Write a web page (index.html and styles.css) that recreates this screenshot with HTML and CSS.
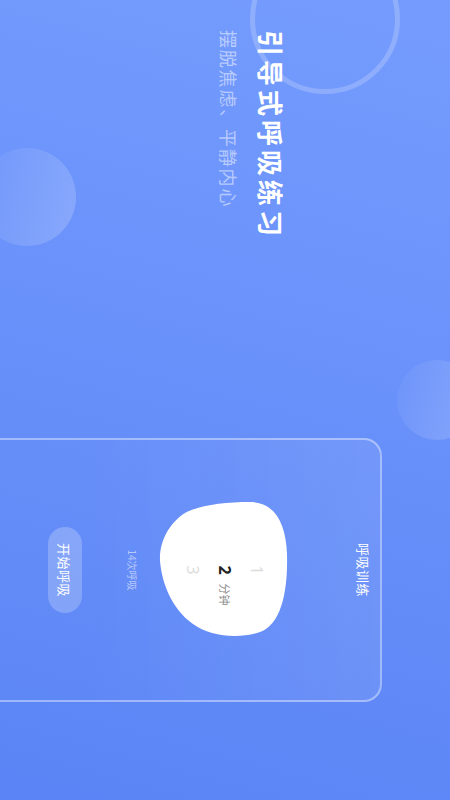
FILE: index.html
```html
<!DOCTYPE html>
<html lang="zh-CN">
<head>
    <meta charset="UTF-8" />
    <meta name="viewport" content="width=device-width, initial-scale=1.0"/>
    <title>引导式呼吸练习</title>
    <link rel="stylesheet" href="styles.css">
</head>
<body>

<div class="screen">
    <!-- decorative bubbles -->
    <div class="ring"></div>
    <div class="bubble bubble-bottom"></div>
    <div class="bubble bubble-top"></div>

    <div class="intro">
        <h1 class="title">引导式呼吸练习</h1>
        <p class="subtitle">摆脱焦虑、平静内心</p>
    </div>

    <div class="card">
        <div class="card-label">呼吸训练</div>

        <div class="blob">
            <svg class="blob-shape" viewBox="0 0 142 134" width="142" height="134">
                <path d="M3 40 C3 15 25 4 55 3 C90 2 125 8 133 30 C140 50 138 80 125 97 C110 118 85 128 62 130 C40 131 22 118 14 105 C6 90 3 65 3 40 Z" fill="#fff"/>
            </svg>
            <div class="picker">
                <div class="picker-item">1</div>
                <div class="picker-item selected">2<span class="unit">分钟</span></div>
                <div class="picker-item">3</div>
            </div>
        </div>

        <div class="count">14次呼吸</div>
        <button class="start-btn">开始呼吸</button>
    </div>
</div>

</body>
</html>
```

FILE: styles.css
```css
* {
    box-sizing: border-box;
    margin: 0;
    padding: 0;
}

html, body {
    width: 450px;
    height: 800px;
    overflow: hidden;
    background: #6690fa;
    font-family: "Noto Sans CJK SC", "Noto Sans", sans-serif;
    color: #fff;
}

/* the app is shown turned a quarter clockwise */
.screen {
    position: relative;
    width: 800px;
    height: 450px;
    transform-origin: 0 0;
    transform: translateX(450px) rotate(90deg);
    background: linear-gradient(105deg, #759cfd 0%, #6890fa 50%, #5a84f5 100%);
    overflow: hidden;
    display: flex;
    align-items: flex-start;
}

/* =========================
   DECORATION
========================= */
.ring {
    position: absolute;
    left: -56px;
    top: 50px;
    width: 150px;
    height: 150px;
    border-radius: 50%;
    border: 5px solid rgba(255,255,255,0.2);
}

.bubble {
    position: absolute;
    border-radius: 50%;
    background: linear-gradient(200deg, rgba(255,255,255,0.2), rgba(255,255,255,0.02));
}

.bubble-bottom {
    left: 148px;
    top: 374px;
    width: 98px;
    height: 98px;
}

.bubble-top {
    left: 360px;
    top: -27px;
    width: 80px;
    height: 80px;
}

/* =========================
   INTRO
========================= */
.intro {
    position: relative;
    padding: 163px 0 0 30px;
    width: 438px;
    flex: none;
}

.title {
    font-size: 26px;
    font-weight: 700;
    letter-spacing: 4px;
    line-height: 32px;
    white-space: nowrap;
}

.subtitle {
    margin-top: 14px;
    font-size: 18px;
    letter-spacing: 1.8px;
    line-height: 24px;
    color: rgba(255,255,255,0.5);
    white-space: nowrap;
}

/* =========================
   CARD
========================= */
.card {
    position: relative;
    flex: none;
    width: 264px;
    height: 420px;
    margin-top: 68px;
    border: 2px solid rgba(255,255,255,0.4);
    border-radius: 18px;
    background: linear-gradient(180deg, rgba(255,255,255,0.08), rgba(255,255,255,0.01) 70%);
    display: flex;
    flex-direction: column;
    align-items: center;
    padding-top: 8px;
}

.card-label {
    font-size: 13px;
    line-height: 18px;
    letter-spacing: 0.5px;
}

.blob {
    position: relative;
    width: 142px;
    height: 134px;
    margin-top: 64px;
}

.blob-shape {
    display: block;
}

.picker {
    position: absolute;
    inset: 0;
    display: flex;
    flex-direction: column;
    align-items: center;
    padding-top: 22px;
    gap: 10px;
}

.picker-item {
    position: relative;
    height: 22px;
    line-height: 22px;
    font-size: 16px;
    color: #dcdcdc;
    font-family: "Noto Sans", sans-serif;
}

.picker-item.selected {
    color: #222;
    font-weight: 700;
}

.unit {
    position: absolute;
    left: 18px;
    bottom: 0;
    font-size: 11px;
    font-weight: 400;
    color: #888;
    white-space: nowrap;
    font-family: "Noto Sans CJK SC", sans-serif;
}

.count {
    margin-top: 17px;
    font-size: 10px;
    line-height: 14px;
    color: rgba(255,255,255,0.55);
}

.start-btn {
    margin-top: 43px;
    width: 86px;
    height: 34px;
    border: none;
    border-radius: 17px;
    background: rgba(255,255,255,0.22);
    color: #fff;
    font-family: "Noto Sans CJK SC", sans-serif;
    font-size: 13px;
    letter-spacing: 0.5px;
}
```
